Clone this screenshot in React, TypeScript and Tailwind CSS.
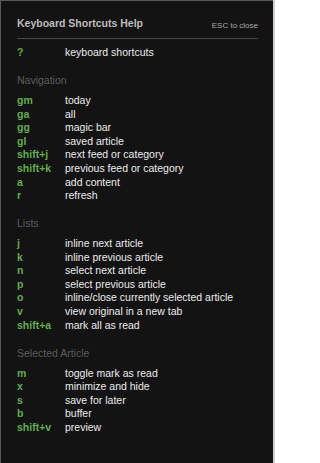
import React from "react";

type Shortcut = { keys: string; label: string };

const sections: { title: string; items: Shortcut[] }[] = [
  {
    title: "Navigation",
    items: [
      { keys: "gm", label: "today" },
      { keys: "ga", label: "all" },
      { keys: "gg", label: "magic bar" },
      { keys: "gl", label: "saved article" },
      { keys: "shift+j", label: "next feed or category" },
      { keys: "shift+k", label: "previous feed or category" },
      { keys: "a", label: "add content" },
      { keys: "r", label: "refresh" },
    ],
  },
  {
    title: "Lists",
    items: [
      { keys: "j", label: "inline next article" },
      { keys: "k", label: "inline previous article" },
      { keys: "n", label: "select next article" },
      { keys: "p", label: "select previous article" },
      { keys: "o", label: "inline/close currently selected article" },
      { keys: "v", label: "view original in a new tab" },
      { keys: "shift+a", label: "mark all as read" },
    ],
  },
  {
    title: "Selected Article",
    items: [
      { keys: "m", label: "toggle mark as read" },
      { keys: "x", label: "minimize and hide" },
      { keys: "s", label: "save for later" },
      { keys: "b", label: "buffer" },
      { keys: "shift+v", label: "preview" },
    ],
  },
];

function Row({ keys, label }: Shortcut) {
  return (
    <div className="flex h-[13.6px] items-center leading-[13.6px]">
      <span className="w-[48px] shrink-0 font-bold text-[#62ad4f]">{keys}</span>
      <span className="text-[#ececec]">{label}</span>
    </div>
  );
}

export default function App() {
  return (
    <div className="min-h-[463px] w-[275px] bg-[#cfcfcf] font-['Liberation_Sans',Arial,sans-serif]">
      <div className="flex min-h-[463px] w-[273px] flex-col border-l border-t border-[#5a5a5a] bg-[#131313] pb-4 pl-[16px] pr-[15px] pt-[17px] text-[10.5px]">
        {/* header */}
        <div className="flex h-[14px] items-end justify-between">
          <span className="font-bold text-[#bdbdbd]">Keyboard Shortcuts Help</span>
          <span className="text-[8px] text-[#a8a8a8]">ESC to close</span>
        </div>
        <div className="mt-[6px] h-px bg-[#474747]" />

        <div className="mt-[7px]">
          <Row keys="?" label="keyboard shortcuts" />
        </div>

        {sections.map((s) => (
          <div key={s.title} className="mt-[14.4px]">
            <div className="mb-[6.4px] h-[13.6px] leading-[13.6px] text-[#5c5c5c]">{s.title}</div>
            {s.items.map((it) => (
              <Row key={it.keys} {...it} />
            ))}
          </div>
        ))}
      </div>
    </div>
  );
}
